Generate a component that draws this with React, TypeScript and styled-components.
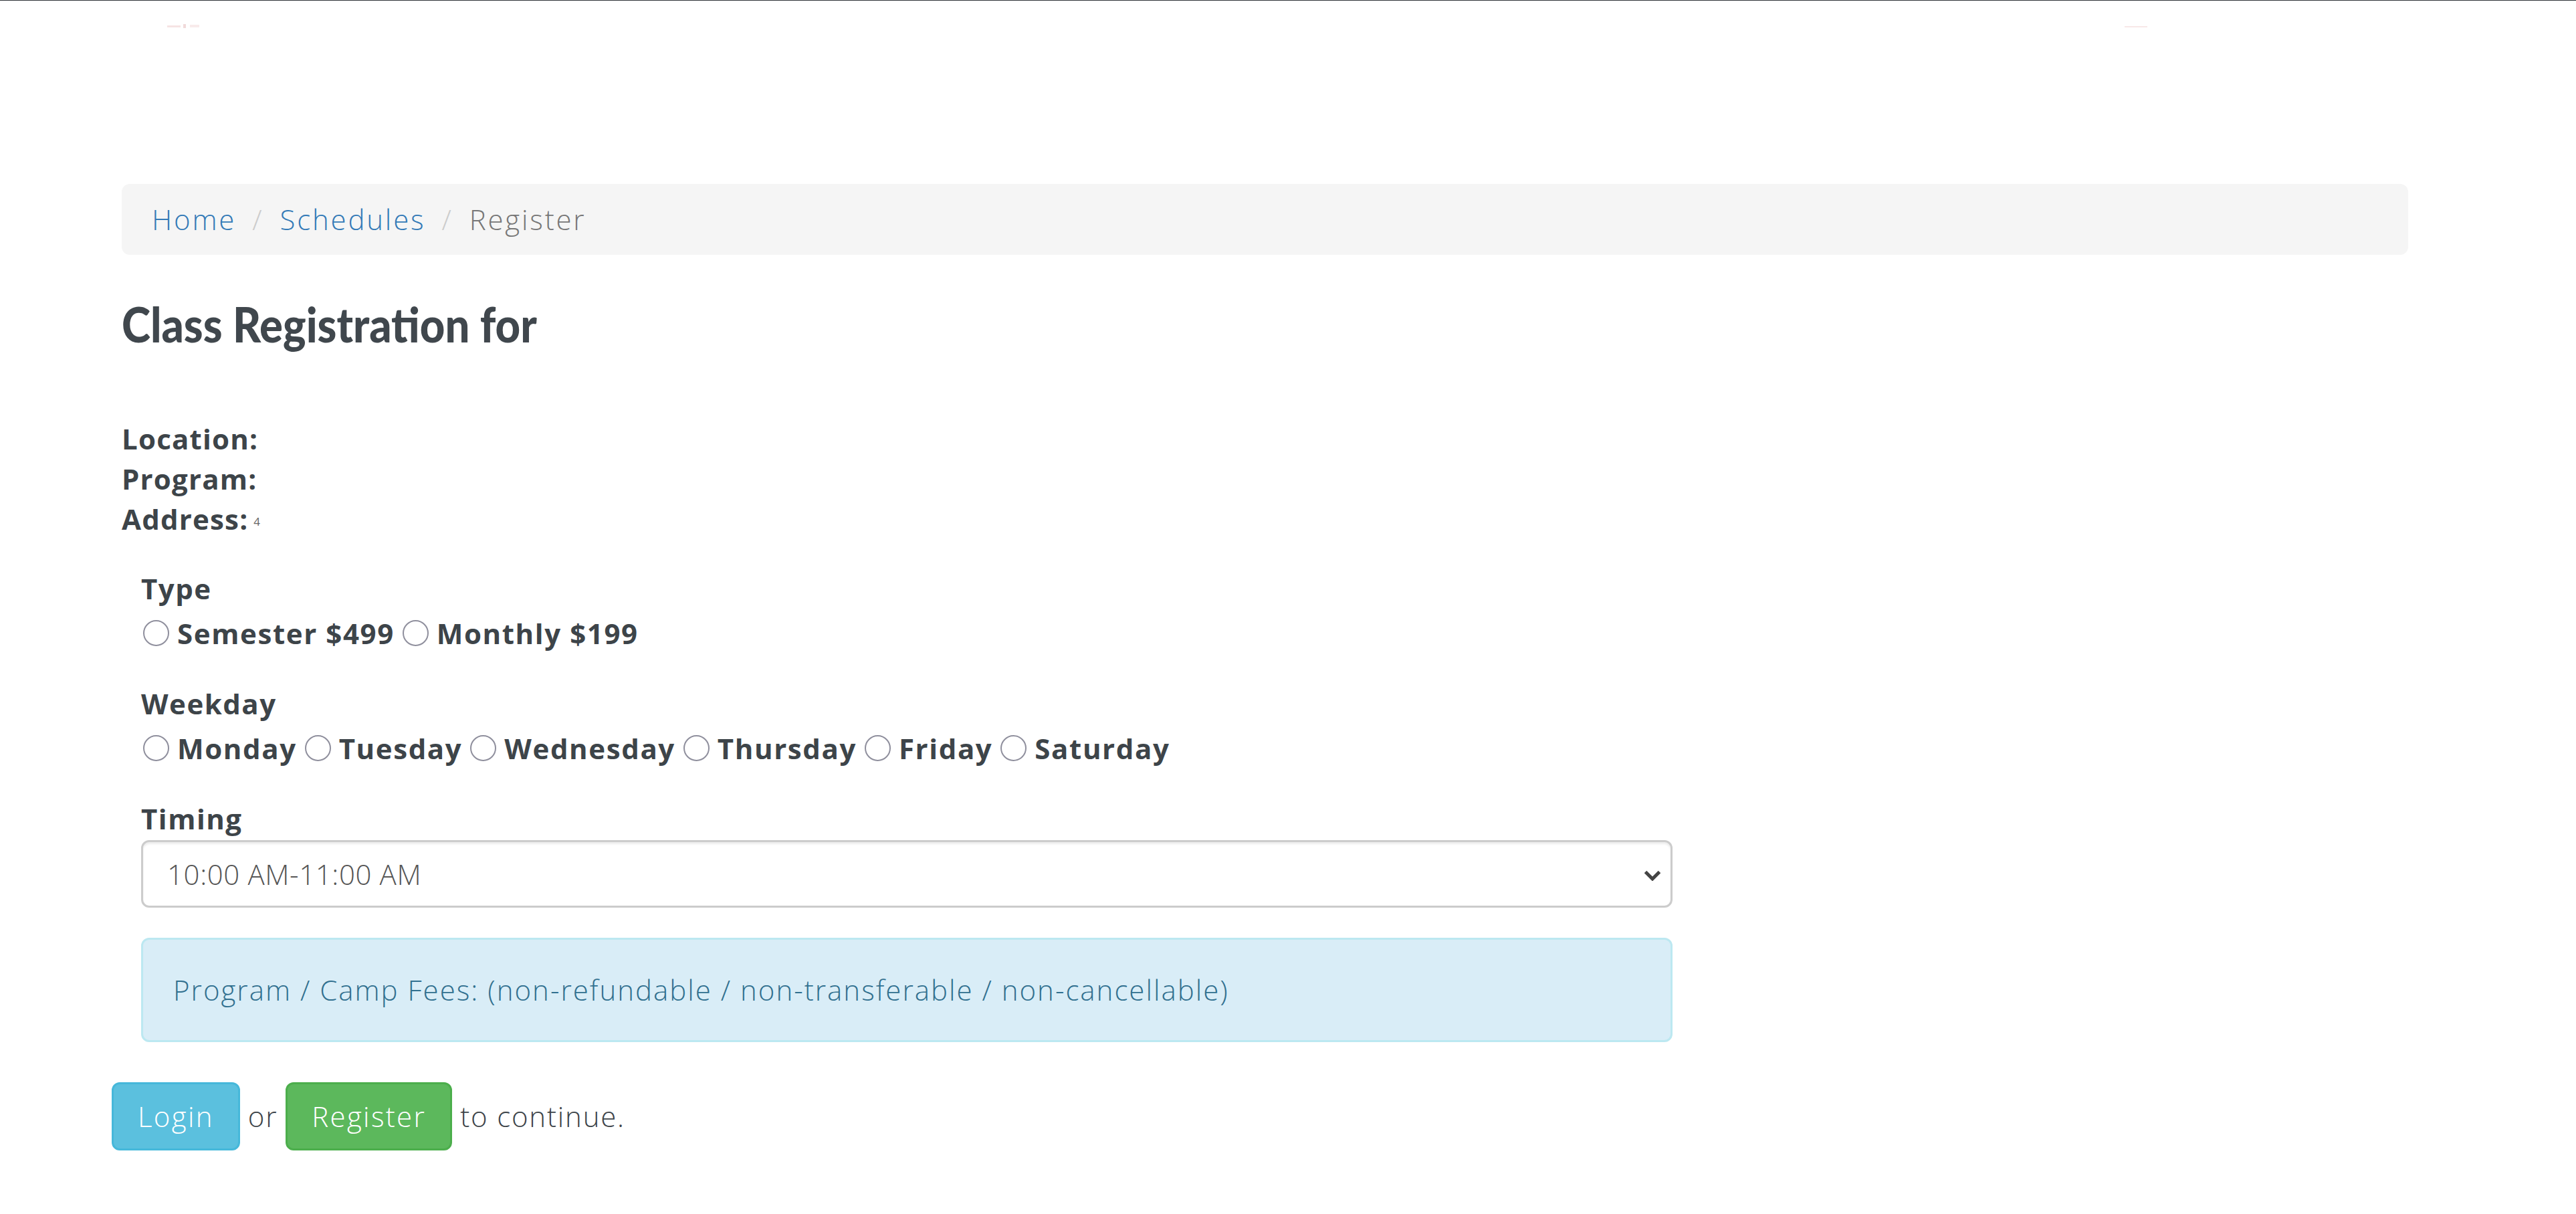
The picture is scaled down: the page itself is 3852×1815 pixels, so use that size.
import React from "react";
import styled, { createGlobalStyle } from "styled-components";

const GlobalStyle = createGlobalStyle`
  html, body {
    margin: 0;
    padding: 0;
    background: #ffffff;
  }
  body {
    font-family: "Open Sans", "Liberation Sans", sans-serif;
    font-size: 42px;
    line-height: 60px;
    color: #3d4449;
  }
  * {
    box-sizing: border-box;
  }
`;

const Page = styled.div`
  border-top: 1px solid #2f3438;
  min-height: 1815px;
`;

const Navbar = styled.nav`
  height: 274px;
  display: flex;
  justify-content: space-between;
  align-items: flex-start;
  padding: 32px 637px 0 240px;
`;

const FaintMark = styled.svg`
  display: block;
  opacity: 0.22;
`;

const Container = styled.main`
  width: 3419px;
  margin-left: 182px;
`;

const Breadcrumb = styled.ol`
  list-style: none;
  margin: 0 0 60px;
  padding: 23px 45px;
  background: #f5f5f5;
  border-radius: 12px;
  font-weight: 300;
  letter-spacing: 2.8px;
`;

const Crumb = styled.li<{ $active?: boolean }>`
  display: inline;
  color: ${(p) => (p.$active ? "#777777" : "#337ab7")};
`;

const Separator = styled.span`
  display: inline-block;
  padding: 0 27px 0 24px;
  color: #cccccc;
  letter-spacing: 0;
`;

const Title = styled.h3`
  margin: 64px 0 102px;
  font-family: "Lato", "Liberation Sans", sans-serif;
  font-weight: 900;
  font-size: 72px;
  line-height: 79px;
  color: #40474d;
  transform: scaleX(0.905);
  transform-origin: left center;
`;

const InfoLine = styled.div`
  font-weight: 700;
  letter-spacing: 1.2px;
`;

const AddressHint = styled.span`
  margin-left: 8px;
  font-size: 17px;
  line-height: 17px;
  font-weight: 400;
  color: #666666;
  vertical-align: 6px;
  letter-spacing: 0;
`;

const Form = styled.form`
  margin: 44px 0 0 29px;
  width: 2290px;
`;

const FormGroup = styled.div`
  margin-bottom: 45px;
`;

const Label = styled.label<{ $gap?: number }>`
  display: block;
  font-weight: 700;
  letter-spacing: 1.5px;
  margin-bottom: ${(p) => p.$gap ?? 7}px;
`;

const RadioRow = styled.div`
  font-weight: 700;
  letter-spacing: 1.6px;
  white-space: nowrap;
`;

const RadioOption = styled.label`
  margin-right: 9px;
`;

const Radio = styled.input`
  appearance: none;
  -webkit-appearance: none;
  display: inline-block;
  width: 39px;
  height: 39px;
  margin: 0 12px -3px 3px;
  border: 2.5px solid #8f8f9d;
  border-radius: 50%;
  background: #ffffff;
`;

const SelectWrap = styled.div`
  position: relative;
`;

const Select = styled.select`
  appearance: none;
  -webkit-appearance: none;
  display: block;
  width: 100%;
  height: 101px;
  padding: 18px 36px;
  border: 3px solid #cccccc;
  border-radius: 12px;
  background: #ffffff;
  box-shadow: inset 0 3px 3px rgba(0, 0, 0, 0.075);
  font-family: inherit;
  font-size: 42px;
  font-weight: 300;
  letter-spacing: 0.6px;
  color: #555555;
`;

const Chevron = styled.svg`
  position: absolute;
  right: 17px;
  top: 45px;
  pointer-events: none;
`;

const Alert = styled.div`
  margin-bottom: 60px;
  padding: 45px;
  border: 3px solid #bce8f1;
  border-radius: 12px;
  background: #d9edf7;
  color: #31708f;
  font-weight: 300;
  letter-spacing: 2px;
`;

const Actions = styled.p`
  margin: 0 0 0 -15px;
  font-weight: 300;
  letter-spacing: 1.8px;
  color: #3d4449;
  display: flex;
  align-items: center;
  gap: 12px;
`;

const Button = styled.a<{ $variant: "info" | "success" }>`
  display: inline-block;
  padding: 18px 36px;
  border: 3px solid ${(p) => (p.$variant === "info" ? "#46b8da" : "#4cae4c")};
  border-radius: 12px;
  background: ${(p) => (p.$variant === "info" ? "#5bc0de" : "#5cb85c")};
  color: #ffffff;
  font-weight: 300;
  letter-spacing: 2.3px;
  text-decoration: none;
`;

const types = ["Semester $499", "Monthly $199"];
const days = ["Monday", "Tuesday", "Wednesday", "Thursday", "Friday", "Saturday"];
const crumbs = ["Home", "Schedules", "Register"];

const App: React.FC = () => {
  return (
    <Page>
      <GlobalStyle />
      <Navbar>
        <FaintMark width="76" height="10" viewBox="0 0 76 10">
          <rect x="10" y="5" width="20" height="3" fill="#d98a8a" />
          <rect x="34" y="3" width="4" height="6" fill="#c25a5a" />
          <rect x="44" y="4" width="14" height="4" fill="#e0a8a8" />
        </FaintMark>
        <FaintMark width="40" height="10" viewBox="0 0 40 10">
          <rect x="2" y="6" width="34" height="2" fill="#e09a9a" />
        </FaintMark>
      </Navbar>
      <Container>
        <Breadcrumb>
          {crumbs.map((c, i) => (
            <Crumb key={c} $active={i === crumbs.length - 1}>
              {i > 0 && <Separator>/</Separator>}
              {c}
            </Crumb>
          ))}
        </Breadcrumb>

        <Title>Class Registration for</Title>

        <InfoLine>Location:</InfoLine>
        <InfoLine>Program:</InfoLine>
        <InfoLine>
          Address:<AddressHint>4</AddressHint>
        </InfoLine>

        <Form>
          <FormGroup>
            <Label>Type</Label>
            <RadioRow>
              {types.map((t) => (
                <RadioOption key={t}>
                  <Radio type="radio" name="type" />
                  {t}
                </RadioOption>
              ))}
            </RadioRow>
          </FormGroup>

          <FormGroup>
            <Label>Weekday</Label>
            <RadioRow>
              {days.map((d) => (
                <RadioOption key={d}>
                  <Radio type="radio" name="weekday" />
                  {d}
                </RadioOption>
              ))}
            </RadioRow>
          </FormGroup>

          <FormGroup>
            <Label $gap={2}>Timing</Label>
            <SelectWrap>
              <Select defaultValue="10-11">
                <option value="10-11">10:00 AM-11:00 AM</option>
              </Select>
              <Chevron width="26" height="16" viewBox="0 0 26 16">
                <path d="M2.5 2.5 L13 13 L23.5 2.5" fill="none" stroke="#444" strokeWidth="5" />
              </Chevron>
            </SelectWrap>
          </FormGroup>

          <Alert>Program / Camp Fees: (non-refundable / non-transferable / non-cancellable)</Alert>
        </Form>

        <Actions>
          <Button $variant="info" href="#">Login</Button>
          or
          <Button $variant="success" href="#">Register</Button>
          to continue.
        </Actions>
      </Container>
    </Page>
  );
};

export default App;
